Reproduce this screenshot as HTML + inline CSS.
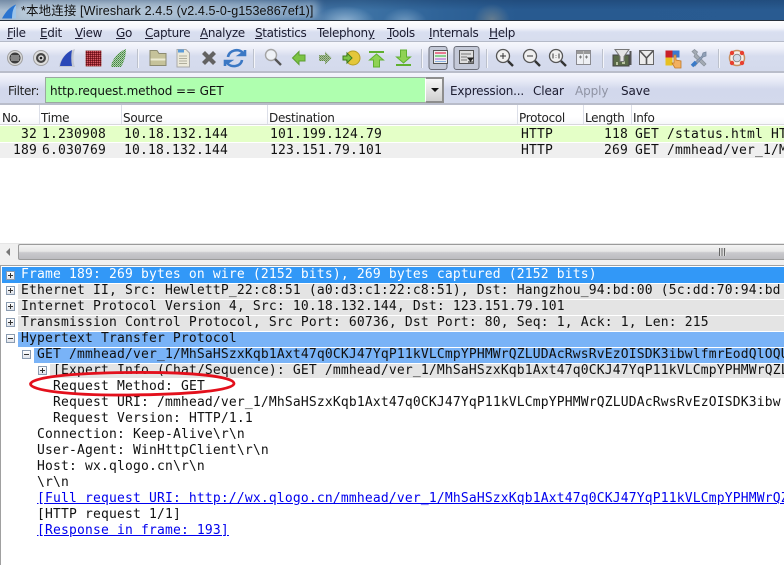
<!DOCTYPE html>
<html><head><meta charset="utf-8"><style>
html,body{margin:0;padding:0}
body{width:784px;height:565px;overflow:hidden;position:relative;background:#fff;font-family:"DejaVu Sans","Liberation Sans",sans-serif}
.a{position:absolute;white-space:pre}
.m{position:absolute;white-space:pre;font:13px/16px "DejaVu Sans Mono","Liberation Mono",monospace;letter-spacing:.17px;color:#111}
.ui{font-size:12px;line-height:16px;color:#1c1c30;letter-spacing:-.35px}
.hd{font-size:12px;line-height:16px;color:#222;letter-spacing:-.3px}
u{text-decoration:underline}
.bar{position:absolute;left:0;width:784px;height:15px}
.pm{position:absolute;width:9px;height:9px;box-sizing:border-box;border:1px solid #8a9bb0;background:linear-gradient(#fff,#dfe3ea)}
.pm:before{content:"";position:absolute;left:1px;top:3px;width:5px;height:1px;background:#333}
.pl:after{content:"";position:absolute;left:3px;top:1px;width:1px;height:5px;background:#333}
.sep{position:absolute;top:49px;width:1px;height:19px;background:#bcc1cc;border-right:1px solid #f4f5fa}
.sepd{position:absolute;top:105px;width:1px;height:19px;background:#dcdfe8}
svg{position:absolute;overflow:visible}
</style></head><body>

<!-- title bar -->
<div class="a" style="left:0;top:0;width:784px;height:21px;background:linear-gradient(90deg,#a9bccf 0,#8fa8c2 170px,#3f6e9f 300px,#3e73a5 360px,#2f6398 440px,#285a90 520px,#295b91 784px)"></div>
<div class="a" style="left:0;top:0;width:784px;height:21px;background:radial-gradient(ellipse 30px 16px at 345px 22px,rgba(190,215,235,.65),transparent),radial-gradient(ellipse 22px 14px at 405px 22px,rgba(170,200,225,.5),transparent),radial-gradient(ellipse 18px 16px at 492px 20px,rgba(150,150,140,.55),transparent),linear-gradient(rgba(20,50,90,.35),transparent 10px)"></div>
<div class="a" style="left:18px;top:1px;width:300px;height:19px;background:rgba(205,220,232,.5);filter:blur(4px)"></div>
<svg style="left:2px;top:4px" width="15" height="15" viewBox="0 0 15 15"><path d="M0 14.5C3 9 7 3 14 0.5V14.5Z" fill="#2a74d0"/><path d="M10 14.5C10 9 11 4 14 1V14.5Z" fill="#9cc4ea"/></svg>
<div class="a" style="left:21px;top:3px;font:12.5px/16px 'Liberation Sans','Noto Sans CJK SC',sans-serif;color:#111;letter-spacing:.12px">*本地连接 [Wireshark 2.4.5 (v2.4.5-0-g153e867ef1)]</div>
<div class="a" style="left:0;top:20px;width:784px;height:1px;background:#26303c"></div>

<!-- menu bar -->
<div class="a" style="left:0;top:21px;width:784px;height:21px;background:linear-gradient(#fdfdfe 0,#f3f5fb 7px,#d9dff0 11px,#d7ddee 20px)"></div>
<div class="a" style="left:0;top:41px;width:784px;height:1px;background:#b5bac8"></div>
<div class="a ui" style="left:7px;top:25px"><u>F</u>ile</div>
<div class="a ui" style="left:40px;top:25px"><u>E</u>dit</div>
<div class="a ui" style="left:75px;top:25px"><u>V</u>iew</div>
<div class="a ui" style="left:116px;top:25px"><u>G</u>o</div>
<div class="a ui" style="left:145px;top:25px"><u>C</u>apture</div>
<div class="a ui" style="left:200px;top:25px"><u>A</u>nalyze</div>
<div class="a ui" style="left:255px;top:25px"><u>S</u>tatistics</div>
<div class="a ui" style="left:317px;top:25px">Telephon<u>y</u></div>
<div class="a ui" style="left:387px;top:25px"><u>T</u>ools</div>
<div class="a ui" style="left:429px;top:25px"><u>I</u>nternals</div>
<div class="a ui" style="left:489px;top:25px"><u>H</u>elp</div>

<!-- toolbar -->
<div class="a" style="left:0;top:42px;width:784px;height:30px;background:linear-gradient(#f6f7fc 0,#eef0f9 6px,#d6dcee 14px,#d4daec 29px)"></div>
<div class="a" style="left:0;top:71px;width:784px;height:2px;background:#b9bdca"></div>

<svg style="left:0;top:42px" width="784" height="30" viewBox="0 0 784 30">
<defs>
<pattern id="st" width="2" height="2" patternUnits="userSpaceOnUse"><rect width="2" height="2" fill="#a01c28"/><rect width="1" height="1" fill="#5c1a20"/><rect x="1" y="1" width="1" height="1" fill="#c4666c"/></pattern>
<pattern id="sg" width="2" height="2" patternUnits="userSpaceOnUse"><rect width="2" height="2" fill="#b4c8b0"/><rect width="1" height="1" fill="#3a8a3a"/><rect x="1" y="1" width="1" height="1" fill="#5aa25a"/></pattern>
<pattern id="sf" width="2" height="2" patternUnits="userSpaceOnUse"><rect width="2" height="2" fill="#a9bca0"/><rect width="1" height="1" fill="#5f8a44"/><rect x="1" y="1" width="1" height="1" fill="#7a9a60"/></pattern>
</defs>
<!-- interfaces -->
<circle cx="15" cy="16" r="7.500" fill="#d8d8d8" stroke="#a0a0a0"/><circle cx="15" cy="16" r="5.500" fill="#3c3c3c"/><path d="M11 14h8M10.500 16h9M11 18h8" stroke="#ccc"/>
<!-- options -->
<circle cx="41" cy="16" r="7.500" fill="#ddd" stroke="#a0a0a0"/><circle cx="41" cy="16" r="5" fill="#444"/><circle cx="41" cy="16" r="2.800" fill="#ddd"/><circle cx="41" cy="16" r="1.300" fill="#222"/>
<!-- start -->
<path d="M59 25C60 17 66 10 75 7C73 13 73 20 75 25Z" fill="#c4c8d2"/><path d="M60 24C61 17 66 11 72 8C71 13 71 19 72 24Z" fill="#2a48b8"/>
<!-- stop -->
<rect x="85.500" y="8.500" width="16" height="16" fill="url(#st)" stroke="#c0b0b0" stroke-dasharray="1 1"/>
<!-- restart -->
<path d="M111 25C112 17 118 10 126 7C126 14 124 20 121 25Z" fill="url(#sg)"/>
<!-- open -->
<path d="M150 8.500h7l2 3h7v12h-16z" fill="#c5c29a" stroke="#8b8a70"/><path d="M150.500 16.500h15v2h-15z" fill="#ecebd2"/>
<!-- file -->
<path d="M177 7.500h9l3.500 3.500v14h-12.500z" fill="#eceadb" stroke="#aaa"/><path d="M179 14h8M179 16.500h8M179 19h8M179 21.500h8" stroke="#b0ae9c"/><path d="M178 7.500h6v3h-6z" fill="#5a9bd8"/>
<!-- close X -->
<path d="M203.500 10.500l11 11M214.500 10.500l-11 11" stroke="#626262" stroke-width="4.200"/>
<!-- reload -->
<path d="M228 15C229 8 239 6 243 11l-3 2h5V8" fill="none" stroke="#3b78c4" stroke-width="2.600"/><path d="M242 18C241 25 231 26 227 21l3-2h-5v5" fill="none" stroke="#3b78c4" stroke-width="2.600"/>
<!-- find -->
<circle cx="271" cy="13" r="5.500" fill="#eef1f6" stroke="#a4a4a4" stroke-width="1.400"/><path d="M275 17l6 6" stroke="#555" stroke-width="2.400"/>
<!-- back -->
<path d="M292.500 16l6.500-6.500v3.500h6v6h-6v3.500z" fill="#7cc444" stroke="#5d9e31"/>
<!-- forward -->
<path d="M331.500 16l-6.500-6.500v3.500h-6v6h6v3.500z" fill="url(#sf)"/>
<!-- goto -->
<circle cx="353" cy="16" r="7" fill="#e4c73a" stroke="#b59f25"/><path d="M352 16l-5-5v3h-4v4h4v3z" fill="#7cc444" stroke="#3f7a1f"/>
<!-- top -->
<path d="M369 10h15" stroke="#60b030" stroke-width="2"/><path d="M376.500 12l7 6h-4v7h-6v-7h-4z" fill="#8fd254" stroke="#60b030"/>
<!-- bottom -->
<path d="M396 23h15" stroke="#60b030" stroke-width="2"/><path d="M403.500 21l7-6h-4V8h-6v7h-4z" fill="#8fd254" stroke="#60b030"/>
<!-- toggled buttons -->
<rect x="429" y="4.500" width="18" height="23" rx="2.500" fill="#c4c9d8" stroke="#6a6d78"/>
<rect x="454" y="4.500" width="25" height="23" rx="2.500" fill="#c4c9d8" stroke="#6a6d78"/>
<rect x="433.500" y="8.500" width="14" height="13" fill="#eee" stroke="#555"/><path d="M435 11h11" stroke="#e87890" stroke-width="2"/><path d="M435 14h11" stroke="#88d090" stroke-width="2"/><path d="M435 17h11" stroke="#d0a0e0" stroke-width="2"/><path d="M435 19.500h11" stroke="#88b0e0"/>
<rect x="459.500" y="8.500" width="14" height="13" fill="#dfdfdf" stroke="#555"/><path d="M461 12h10M461 15h6M461 18h6" stroke="#777"/><path d="M468 16h5l-2.500 3z M468 20h5" fill="#222" stroke="#222"/>
<!-- zoom in -->
<circle cx="503" cy="14" r="6.500" fill="#f0f0f0" stroke="#555" stroke-width="1.300"/><path d="M508 19l5 5" stroke="#333" stroke-width="2.400"/><path d="M500 14h6M503 11v6" stroke="#333"/>
<!-- zoom out -->
<circle cx="530" cy="14" r="6.500" fill="#f0f0f0" stroke="#555" stroke-width="1.300"/><path d="M535 19l5 5" stroke="#333" stroke-width="2.400"/><path d="M527 14h6" stroke="#333"/>
<!-- zoom 1:1 -->
<circle cx="556" cy="14" r="6.500" fill="#f0f0f0" stroke="#555" stroke-width="1.300"/><path d="M561 19l5 5" stroke="#333" stroke-width="2.400"/><path d="M553 11.500v5M559 11.500v5M556 13v.5M556 15v.5" stroke="#333"/>
<!-- resize -->
<rect x="576.500" y="8.500" width="14" height="14" fill="#eef0f4" stroke="#8a8a90"/><path d="M577 10.500h13" stroke="#999" stroke-width="3"/><path d="M583.500 9v13" stroke="#bbb"/><path d="M579 15h3M580.500 13.500v3M585 15h3M586.500 13.500v3" stroke="#777"/>
<!-- capture filter -->
<rect x="613" y="13" width="16" height="11" fill="#5a6a48" stroke="#444"/><path d="M616 20h2v3h-2zM622 19h3v3h-3z" fill="#b9c4a0"/><path d="M615 7.500h14l-5 7v5h-4v-5z" fill="#e4e4e4" stroke="#777"/><path d="M630.500 9v14" stroke="#555" stroke-width="2"/>
<!-- display filter -->
<rect x="639.500" y="8.500" width="14" height="14" fill="#ececec" stroke="#666"/><path d="M640 9l6.500 7 6.500-7M646.500 16v6" fill="none" stroke="#555" stroke-width="1.600"/>
<!-- coloring -->
<rect x="665.500" y="8.500" width="7" height="7" fill="#c8202a"/><rect x="672.500" y="8.500" width="7" height="7" fill="#3b7ad0"/><rect x="665.500" y="15.500" width="7" height="8" fill="#e8c020"/><rect x="672.500" y="15.500" width="7" height="8" fill="#dfe6f0"/><path d="M674 13v8h-2l3 5h6v-7l-5-1v-5z" fill="#f2b060" stroke="#c07828" stroke-width=".8"/>
<!-- prefs -->
<path d="M692 9.500l3 3-1 2 10 9.500 2-2-9.500-10 1-2-3-2.500z" fill="#a4abb4" stroke="#8a929c" stroke-width=".8"/><path d="M706 10l-3 1-1 3-9 8 2 2 8-9 3-1z" fill="#90a0b8" stroke="#7a8aa0" stroke-width=".8"/><path d="M692 24l4-4" stroke="#3a7ac8" stroke-width="3.500"/>
<!-- help -->
<circle cx="737" cy="16" r="7.500" fill="#f4f0ea" stroke="#c89060" stroke-width="1.500"/><circle cx="737" cy="16" r="3.800" fill="#d4dce8" stroke="#888"/><circle cx="732" cy="11" r="2.200" fill="#e84030"/><circle cx="742" cy="11" r="2.200" fill="#e84030"/><circle cx="732" cy="21" r="2.200" fill="#e84030"/><circle cx="742" cy="21" r="2.200" fill="#e84030"/>
</svg>
<div class="sep" style="left:137px"></div><div class="sep" style="left:253px"></div><div class="sep" style="left:421px"></div><div class="sep" style="left:486px"></div><div class="sep" style="left:602px"></div><div class="sep" style="left:718px"></div>

<!-- filter bar -->
<div class="a" style="left:0;top:73px;width:784px;height:31px;background:linear-gradient(#f5f6fc 0,#e6e9f6 8px,#d2d8ec 16px,#d3d9ec 30px)"></div>
<div class="a" style="left:0;top:103px;width:784px;height:2px;background:#b9bdca"></div>
<div class="a ui" style="left:8px;top:83px;color:#222">Filter:</div>
<div class="a" style="left:45px;top:77px;width:399px;height:26px;box-sizing:border-box;background:#afffaf;border:1px solid #9aa8a0;border-right:none"></div>
<div class="a" style="left:425px;top:77px;width:19px;height:26px;box-sizing:border-box;background:linear-gradient(#f6f6f6,#d0d0d0);border:2px solid #8e8e8e;border-left:1px solid #fff"></div>
<div class="a" style="left:431px;top:88px;width:0;height:0;border:4px solid transparent;border-top:4px solid #111;border-bottom:none"></div>
<div class="a" style="left:50px;top:83px;font-size:12px;line-height:16px;color:#111;letter-spacing:-.1px">http.request.method == GET</div>
<div class="a ui" style="left:450px;top:83px;letter-spacing:-.2px">Expression...</div>
<div class="a ui" style="left:533px;top:83px;letter-spacing:-.1px">Clear</div>
<div class="a ui" style="left:575px;top:83px;color:#8f93a3;letter-spacing:-.1px">Apply</div>
<div class="a ui" style="left:621px;top:83px;letter-spacing:-.1px">Save</div>

<!-- list header -->
<div class="a" style="left:0;top:105px;width:784px;height:20px;background:linear-gradient(#fff,#fff 12px,#f6f7fa);border-bottom:1px solid #d8d8dc;box-sizing:border-box"></div>
<div class="a hd" style="left:2px;top:110px">No.</div>
<div class="a hd" style="left:41px;top:110px">Time</div>
<div class="a hd" style="left:123px;top:110px">Source</div>
<div class="a hd" style="left:269px;top:110px">Destination</div>
<div class="a hd" style="left:519px;top:110px">Protocol</div>
<div class="a hd" style="left:585px;top:110px">Length</div>
<div class="a hd" style="left:633px;top:110px">Info</div>
<div class="sepd" style="left:39px"></div><div class="sepd" style="left:121px"></div><div class="sepd" style="left:267px"></div><div class="sepd" style="left:517px"></div><div class="sepd" style="left:583px"></div><div class="sepd" style="left:631px"></div>

<!-- rows -->
<div class="bar" style="top:126px;height:16px;background:#e4ffc7"></div>
<div class="bar" style="top:143px;height:15px;background:#efefef"></div>
<div class="m" style="left:21px;top:127px">32</div>
<div class="m" style="left:42px;top:127px">1.230908</div>
<div class="m" style="left:124px;top:127px">10.18.132.144</div>
<div class="m" style="left:270px;top:127px">101.199.124.79</div>
<div class="m" style="left:521px;top:127px">HTTP</div>
<div class="m" style="left:604px;top:127px">118</div>
<div class="m" style="left:635px;top:127px">GET /status.html HT</div>
<div class="m" style="left:13px;top:143px">189</div>
<div class="m" style="left:42px;top:143px">6.030769</div>
<div class="m" style="left:124px;top:143px">10.18.132.144</div>
<div class="m" style="left:270px;top:143px">123.151.79.101</div>
<div class="m" style="left:521px;top:143px">HTTP</div>
<div class="m" style="left:604px;top:143px">269</div>
<div class="m" style="left:635px;top:143px">GET /mmhead/ver_1/M</div>

<!-- h scrollbar -->
<div class="a" style="left:0;top:243px;width:784px;height:22px;background:#f0f0f0;border-top:1px solid #e6e6e6;box-sizing:border-box"></div>
<div class="a" style="left:18px;top:244px;width:766px;height:16px;box-sizing:border-box;border:1px solid #9b9b9b;border-right:none;border-radius:2px 0 0 2px;background:linear-gradient(#f4f4f4 0,#e6e6e6 45%,#c9c9cd 55%,#bcbcc0 100%)"></div>
<div class="a" style="left:6px;top:248px;width:0;height:0;border:4px solid transparent;border-right:4px solid #777;border-left:none"></div>
<div class="a" style="left:719px;top:248px;width:7px;height:8px;background:repeating-linear-gradient(90deg,#666 0,#666 1px,#ddd 1px,#ddd 2.5px)"></div>

<!-- details pane -->
<div class="a" style="left:0;top:265px;width:784px;height:300px;background:#fff;border-left:1px solid #a0a0a0;border-top:1px solid #a0a0a0;box-sizing:border-box"></div>
<div class="bar" style="left:2px;top:267px;width:782px;height:16px;background:#3298f7"></div>
<div class="bar" style="left:18px;top:284px;width:766px;background:#e4e4e4"></div>
<div class="bar" style="left:18px;top:300px;width:766px;background:#e4e4e4"></div>
<div class="bar" style="left:18px;top:316px;width:766px;background:#e4e4e4"></div>
<div class="bar" style="left:18px;top:332px;width:766px;background:#79b3f7"></div>
<div class="bar" style="left:34px;top:348px;width:750px;background:#79b3f7"></div>
<div class="bar" style="left:50px;top:364px;width:734px;height:14px;background:#e4e4e4"></div>

<div class="pm pl" style="left:6px;top:271px"></div>
<div class="pm pl" style="left:6px;top:286px"></div>
<div class="pm pl" style="left:6px;top:302px"></div>
<div class="pm pl" style="left:6px;top:318px"></div>
<div class="pm" style="left:6px;top:334px"></div>
<div class="pm" style="left:22px;top:350px"></div>
<div class="pm pl" style="left:38px;top:366px"></div>

<div class="m" style="left:21px;top:267px;color:#fff">Frame 189: 269 bytes on wire (2152 bits), 269 bytes captured (2152 bits)</div>
<div class="m" style="left:21px;top:283px">Ethernet II, Src: HewlettP_22:c8:51 (a0:d3:c1:22:c8:51), Dst: Hangzhou_94:bd:00 (5c:dd:70:94:bd</div>
<div class="m" style="left:21px;top:299px">Internet Protocol Version 4, Src: 10.18.132.144, Dst: 123.151.79.101</div>
<div class="m" style="left:21px;top:315px">Transmission Control Protocol, Src Port: 60736, Dst Port: 80, Seq: 1, Ack: 1, Len: 215</div>
<div class="m" style="left:21px;top:331px">Hypertext Transfer Protocol</div>
<div class="m" style="left:37px;top:347px">GET /mmhead/ver_1/MhSaHSzxKqb1Axt47q0CKJ47YqP11kVLCmpYPHMWrQZLUDAcRwsRvEzOISDK3ibwlfmrEodQlOQU</div>
<div class="m" style="left:53px;top:363px">[Expert Info (Chat/Sequence): GET /mmhead/ver_1/MhSaHSzxKqb1Axt47q0CKJ47YqP11kVLCmpYPHMWrQZL</div>
<div class="m" style="left:53px;top:379px">Request Method: GET</div>
<div class="m" style="left:53px;top:395px">Request URI: /mmhead/ver_1/MhSaHSzxKqb1Axt47q0CKJ47YqP11kVLCmpYPHMWrQZLUDAcRwsRvEzOISDK3ibw</div>
<div class="m" style="left:53px;top:411px">Request Version: HTTP/1.1</div>
<div class="m" style="left:37px;top:427px">Connection: Keep-Alive\r\n</div>
<div class="m" style="left:37px;top:443px">User-Agent: WinHttpClient\r\n</div>
<div class="m" style="left:37px;top:459px">Host: wx.qlogo.cn\r\n</div>
<div class="m" style="left:37px;top:475px">\r\n</div>
<div class="m" style="left:37px;top:491px;color:#0000ee;text-decoration:underline">[Full request URI: http://wx.qlogo.cn/mmhead/ver_1/MhSaHSzxKqb1Axt47q0CKJ47YqP11kVLCmpYPHMWrQZ</div>
<div class="m" style="left:37px;top:507px">[HTTP request 1/1]</div>
<div class="m" style="left:37px;top:523px;color:#0000ee;text-decoration:underline">[Response in frame: 193]</div>

<!-- red ellipse -->
<svg style="left:28px;top:370px" width="210" height="32" viewBox="0 0 210 32"><path d="M2.500 14C3.500 7.500 40 3 104 2.500C165 2 206 6.500 206 13.500C206 20.500 160 24.500 100 25C42 25.500 2.500 20.500 2.500 14Z" fill="none" stroke="#e3101c" stroke-width="2.800"/></svg>
</body></html>
